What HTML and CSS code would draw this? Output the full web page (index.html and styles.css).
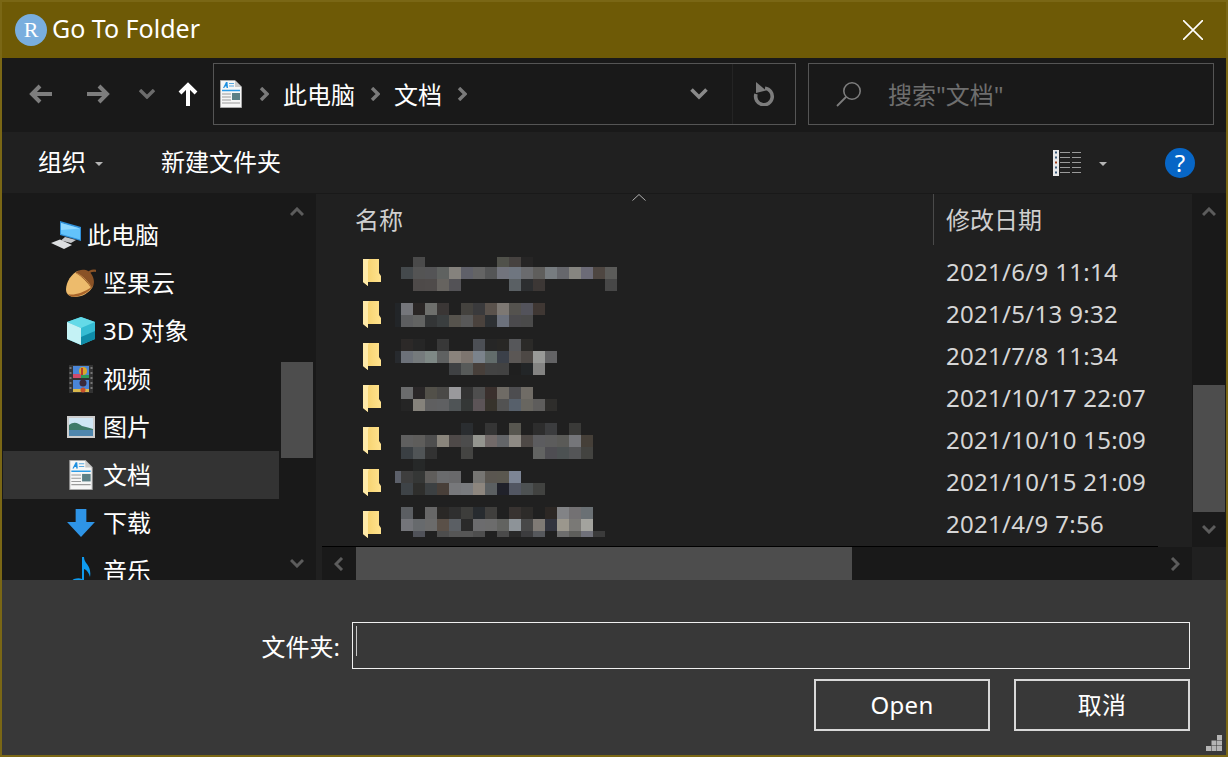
FILE: index.html
```html
<!DOCTYPE html>
<html>
	<head>
		<title>Go To Folder</title>
		<link rel="stylesheet" href="styles.css">
	</head>
	<body>
		<div class="window">
			<div class="titlebar">
				<div class="logo">R</div>
				<div class="title">Go To Folder</div>
				<svg class="close" viewBox="0 0 20 20"><path d="M0 0L20 20M20 0L0 20" stroke="#fff" stroke-width="1.6" fill="none"/></svg>
			</div>

			<div class="nav">
				<svg class="nav-back" viewBox="0 0 24 20"><path d="M23 10H4M11 2L3 10L11 18" stroke="#7d7d7d" stroke-width="4" fill="none"/></svg>
				<svg class="nav-forward" viewBox="0 0 24 20"><path d="M1 10H20M13 2L21 10L13 18" stroke="#7d7d7d" stroke-width="4" fill="none"/></svg>
				<svg class="nav-down" viewBox="0 0 16 10"><path d="M1 1L8 8L15 1" stroke="#6c6c6c" stroke-width="3.4" fill="none"/></svg>
				<svg class="nav-up" viewBox="0 0 20 24"><path d="M10 24V4M2 11L10 3L18 11" stroke="#fff" stroke-width="4" fill="none"/></svg>

				<div class="address">
					<svg class="doc" viewBox="0 0 22 28"><use href="#doc-icon"/></svg>
					<svg class="crumb" viewBox="0 0 10 14"><path d="M2 1L8 7L2 13" stroke="#7a7a7a" stroke-width="3.4" fill="none"/></svg>
					<span class="crumb-text">此电脑</span>
					<svg class="crumb" viewBox="0 0 10 14"><path d="M2 1L8 7L2 13" stroke="#7a7a7a" stroke-width="3.4" fill="none"/></svg>
					<span class="crumb-text">文档</span>
					<svg class="crumb" viewBox="0 0 10 14"><path d="M2 1L8 7L2 13" stroke="#7a7a7a" stroke-width="3.4" fill="none"/></svg>
					<svg class="address-drop" viewBox="0 0 18 12"><path d="M1.5 1.5L9 9L16.5 1.5" stroke="#8a8a8a" stroke-width="3.6" fill="none"/></svg>
					<div class="refresh">
						<svg viewBox="0 0 22 24"><path d="M12 6.200A8.300 8.300 0 1 1 3 12" stroke="#7d7d7d" stroke-width="3.6" fill="none"/><path d="M3 0L13 8.500L3 11Z" fill="#7d7d7d"/></svg>
					</div>
				</div>

				<div class="search">
					<svg viewBox="0 0 26 26"><circle cx="16" cy="10" r="8.2" stroke="#7d7d7d" stroke-width="1.6" fill="none"/><path d="M10 16L1 25" stroke="#7d7d7d" stroke-width="1.8"/></svg>
					<span>搜索"文档"</span>
				</div>
			</div>

			<div class="toolbar">
				<span class="tool">组织</span>
				<i class="caret caret-org"></i>
				<span class="tool tool-new">新建文件夹</span>
				<svg class="view-icon" viewBox="0 0 28 26">
					<rect x="0" y="0" width="6" height="26" fill="#e8e8e8"/>
					<path d="M2 2.500h2M2 7.500h2M2 17.500h2M2 22.500h2" stroke="#3a5a7a" stroke-width="2"/>
					<path d="M2 12.500h2" stroke="#a0401c" stroke-width="2"/>
					<path d="M7 2.500h10M19 2.500h9M7 7.500h10M19 7.500h9M7 12.500h10M19 12.500h9M7 17.500h10M19 17.500h9M7 22.500h10M19 22.500h9" stroke="#9a9a9a" stroke-width="1"/>
				</svg>
				<i class="caret caret-view"></i>
				<div class="help">?</div>
			</div>

			<div class="main">
				<div class="sidebar">
					<div class="tree">
						<div class="tree-row tree-root">
							<svg viewBox="0 0 30 28">
								<path d="M9 0L30 6V20L9 14Z" fill="#2f8fd8"/>
								<path d="M10 2L29 7.500V18.500L10 13Z" fill="#63c3fb"/>
								<path d="M10 2L29 7.500L10 9Z" fill="#8fd8ff"/>
								<path d="M14 16L25 19L20 22L10 19.500Z" fill="#c4c6c9"/>
								<path d="M0 22L9 18.500L21 24L13 28Z" fill="#dcdee0"/>
							</svg>
							<span>此电脑</span>
						</div>
						<div class="tree-row">
							<svg viewBox="0 0 32 30">
								<path d="M13 2C6 5 0 14 0 22C0 27 4 30 9 30C17 30 25 26 29 18Z" fill="#edbb6c"/>
								<path d="M1 26C5 29 16 27 28 19L26 22C20 28 10 31 5 29Z" fill="#a8642a"/>
								<path d="M10 4C15 -1 25 0 28 7C31 13 30 18 27 21C24 15 17 8 10 4Z" fill="#8a5226"/>
								<path d="M11 4.500C17 7 24 13 27 20" stroke="#c58a45" fill="none"/>
								<path d="M24 5C25 2.500 28 1.500 32 2" stroke="#8a5226" stroke-width="2.400" fill="none"/>
							</svg>
							<span>坚果云</span>
						</div>
						<div class="tree-row">
							<svg viewBox="0 0 30 30">
								<path d="M15 1L29 6V23L15 29L1 23V6Z" fill="#35bcd3"/>
								<path d="M15 1L29 6L15 12L1 6Z" fill="#64dae8"/>
								<path d="M1 6L15 12V29L1 23Z" fill="#c4f2f5"/>
								<path d="M15 21L29 15V23L15 29Z" fill="#0f8ca8"/>
							</svg>
							<span>3D 对象</span>
						</div>
						<div class="tree-row">
							<svg viewBox="0 0 30 30">
								<rect x="3" y="1" width="24" height="28" fill="#333"/>
								<path d="M4.500 3v2M4.500 8v2M4.500 13v2M4.500 18v2M4.500 23v2M25.500 3v2M25.500 8v2M25.500 13v2M25.500 18v2M25.500 23v2" stroke="#777" stroke-width="2"/>
								<rect x="7" y="2" width="16" height="12" fill="#4a86d8"/>
								<rect x="7" y="16" width="16" height="12" fill="#4a86d8"/>
								<rect x="7" y="10" width="8" height="4" fill="#d04a6a"/>
								<rect x="15" y="11" width="8" height="3" fill="#2f9a5a"/>
								<rect x="7" y="25" width="16" height="3" fill="#d8b84c"/>
								<circle cx="17" cy="7" r="4" fill="#d8a82c"/>
								<path d="M15 4h2v7h-2z" fill="#b83a2c"/>
								<circle cx="17" cy="19" r="3.500" fill="#3a2a3a"/>
								<circle cx="17" cy="26" r="2.500" fill="#c8502c"/>
							</svg>
							<span>视频</span>
						</div>
						<div class="tree-row">
							<svg viewBox="0 0 30 24">
								<rect x="1" y="1" width="28" height="22" fill="#cdcdcd"/>
								<rect x="3" y="3" width="24" height="18" fill="#cfe6f4"/>
								<path d="M3 10C8 6 12 8 16 11C20 12 24 13 27 14V16H3Z" fill="#3f7a68"/>
								<rect x="3" y="15" width="24" height="6" fill="#4f86ad"/>
							</svg>
							<span>图片</span>
						</div>
						<div class="tree-row tree-active">
							<svg viewBox="0 0 22 28"><use href="#doc-icon"/></svg>
							<span>文档</span>
						</div>
						<div class="tree-row">
							<svg viewBox="0 0 28 28"><path d="M9 1H19V13H27L14 27L1 13H9Z" fill="#2e94e6"/></svg>
							<span>下载</span>
						</div>
						<div class="tree-row">
							<svg viewBox="0 0 24 30"><path d="M13 1H15C15 8 23 9 21 21C20 17 18 14 15 13V24C15 28 10 30 5 30C1 30 1 25 5 23C8 22 11 22 13 23Z" fill="#0f9bef"/></svg>
							<span>音乐</span>
						</div>
					</div>
					<div class="vscroll vscroll-side">
						<svg class="arrow arrow-up" viewBox="0 0 14 10"><path d="M1 8L7 2L13 8" stroke="#5c5c5c" stroke-width="3" fill="none"/></svg>
						<div class="thumb thumb-side"></div>
						<svg class="arrow arrow-down" viewBox="0 0 14 10"><path d="M1 2L7 8L13 2" stroke="#5c5c5c" stroke-width="3" fill="none"/></svg>
					</div>
				</div>

				<div class="splitter"></div>

				<div class="content">
					<div class="content-body">
						<div class="files">
							<div class="files-head">
								<div class="head-name">名称</div>
								<div class="head-date">修改日期</div>
								<svg class="sort" viewBox="0 0 14 7"><path d="M0.500 6.500L7 0.500L13.500 6.500" stroke="#b0b0b0" fill="none"/></svg>
							</div>
							<div class="files-rows" id="rows"></div>
							<div class="files-line"></div>
						</div>
						<div class="vscroll vscroll-list">
							<svg class="arrow arrow-up" viewBox="0 0 14 10"><path d="M1 8L7 2L13 8" stroke="#5c5c5c" stroke-width="3" fill="none"/></svg>
							<div class="thumb thumb-list"></div>
							<svg class="arrow arrow-down arrow-down-list" viewBox="0 0 14 10"><path d="M1 2L7 8L13 2" stroke="#5c5c5c" stroke-width="3" fill="none"/></svg>
						</div>
					</div>
					<div class="hscroll">
						<div class="hscroll-btn"><svg viewBox="0 0 10 14"><path d="M8 1L2 7L8 13" stroke="#5c5c5c" stroke-width="3" fill="none"/></svg></div>
						<div class="hscroll-thumb"></div>
						<div class="hscroll-btn hscroll-right"><svg viewBox="0 0 10 14"><path d="M2 1L8 7L2 13" stroke="#5c5c5c" stroke-width="3" fill="none"/></svg></div>
						<div class="hscroll-corner"></div>
					</div>
				</div>
			</div>

			<div class="bottom">
				<div class="field">
					<label>文件夹:</label>
					<div class="input"><i class="text-caret"></i></div>
				</div>
				<div class="buttons">
					<div class="btn">Open</div>
					<div class="btn">取消</div>
				</div>
				<svg class="grip" viewBox="0 0 16 16">
					<path d="M11 0h5v5h-5zM5.500 5.500h5v5h-5zM11 5.500h5v5h-5zM0 11h5v5H0zM5.500 11h5v5h-5zM11 11h5v5h-5z" fill="#b4b4b4"/>
				</svg>
			</div>
		</div>

		<svg class="defs">
			<symbol id="doc-icon" viewBox="0 0 22 28">
				<path d="M0.500 0.500H15L21.500 7V27.500H0.500Z" fill="#f6f6f6" stroke="#a8a8a8"/>
				<path d="M15 0.500V7H21.500Z" fill="#c9c9c9"/>
				<path d="M3 8L6 2H7.500L8 8H6.500V6.500H5L4.300 8Z" fill="#1d8fe0"/>
				<path d="M9 3.500H14M9 6H14" stroke="#58a8e0"/>
				<path d="M2 10.500H20" stroke="#2b9be6" stroke-width="1.500"/>
				<path d="M2 14H11M2 17H11M2 20H11M2 23H20" stroke="#9a9a9a"/>
				<rect x="12" y="13" width="8" height="7" fill="#5b7f86"/>
			</symbol>
		</svg>

		<script src="script.js"></script>
	</body>
</html>
```

FILE: styles.css
```css
* {
	margin: 0; padding: 0;
	box-sizing: border-box;
}

body {
	font-family: "Noto Sans", "Noto Sans CJK SC", sans-serif;
	font-size: 24px;
	color: #fff;
	background: #383838;
	overflow: hidden;
}

.window {
	width: 1228px; height: 757px;
	display: flex;
	flex-direction: column;
	border: solid 2px #7a6715;
	position: relative;
}

.defs {
	position: absolute;
	width: 0; height: 0;
}

/* title */

.titlebar {
	height: 56px;
	flex: none;
	display: flex;
	align-items: center;
	padding-left: 13px;
	background: #6e5a06;
}

.logo {
	width: 32px; height: 32px;
	border-radius: 100%;
	background: #79aede;
	font-family: "Liberation Serif", serif;
	font-size: 22px;
	line-height: 32px;
	text-align: center;
}

.title {
	margin-left: 5px;
	margin-bottom: 4px;
	font-size: 25px;
}

.close {
	width: 20px; height: 20px;
	margin-left: auto;
	margin-right: 23px;
}

/* nav */

.nav {
	height: 74px;
	flex: none;
	display: flex;
	align-items: center;
	padding: 5px 12px 7px 0;
	background: #191919;
}

.nav-back, .nav-forward {
	width: 24px; height: 20px;
	flex: none;
}

.nav-back { margin-left: 27px; }
.nav-forward { margin-left: 33px; }

.nav-down {
	width: 16px; height: 10px;
	flex: none;
	margin-left: 29px;
}

.nav-up {
	width: 20px; height: 24px;
	flex: none;
	margin-left: 23px;
}

.address, .search {
	height: 62px;
	display: flex;
	align-items: center;
	border: solid 1px #555;
}

.address {
	width: 583px;
	flex: none;
	margin-left: 15px;
}

.doc {
	width: 22px; height: 28px;
	flex: none;
	margin-left: 6px;
	margin-right: 2px;
}

.crumb {
	width: 10px; height: 14px;
	flex: none;
	margin-left: 15px;
}

.crumb-text {
	margin-left: 14px;
	margin-bottom: 2px;
}

.address-drop {
	width: 18px; height: 12px;
	margin-left: auto;
}

.refresh {
	width: 63px; height: 100%;
	margin-left: 24px;
	display: flex;
	align-items: center;
	justify-content: center;
	border-left: solid 1px #242424;
}

.refresh svg {
	width: 22px; height: 24px;
}

.search {
	flex: 1;
	margin-left: 12px;
	color: #6e6e6e;
}

.search svg {
	width: 26px; height: 26px;
	margin-left: 27px;
}

.search span {
	margin-left: 26px;
	margin-bottom: 2px;
}

/* toolbar */

.toolbar {
	height: 62px;
	flex: none;
	display: flex;
	align-items: center;
	background: #202020;
	border-bottom: solid 1px #191919;
}

.tool {
	margin-left: 36px;
	margin-bottom: 4px;
}

.tool-new {
	margin-left: 58px;
}

.caret {
	width: 0; height: 0;
	border-left: solid 4px transparent;
	border-right: solid 4px transparent;
	border-top: solid 4px #b5b5b5;
}

.caret-org { margin-left: 9px; margin-top: 2px; }

.view-icon {
	width: 28px; height: 26px;
	margin-left: auto;
}

.caret-view { margin-left: 18px; margin-top: 2px; }

.help {
	width: 30px; height: 30px;
	margin-left: 58px;
	margin-right: 31px;
	border-radius: 100%;
	background: #0766c6;
	font-size: 24px;
	line-height: 30px;
	text-align: center;
}

/* main */

.main {
	flex: 1;
	display: flex;
	min-height: 0;
}

.sidebar {
	width: 314px;
	flex: none;
	display: flex;
	background: #191919;
}

.tree {
	width: 277px;
	padding-top: 17px;
	overflow: hidden;
}

.tree-row {
	height: 48px;
	display: flex;
	align-items: center;
	margin-left: 1px;
	padding-left: 63px;
}

.tree-row svg {
	width: 30px; height: 30px;
	flex: none;
}

.tree-row span {
	margin-left: 7px;
	margin-bottom: 4px;
}

.tree-root {
	padding-left: 48px;
}

.tree-root span {
	margin-left: 6px;
}

.tree-active {
	background: #333;
}

.vscroll {
	flex: none;
	display: flex;
	flex-direction: column;
	align-items: center;
}

.vscroll-side {
	width: 32px;
	margin-left: 2px;
	padding-right: 0;
}

.vscroll-list {
	width: 34px;
	background: #191919;
	padding-left: 1px;
	padding-right: 1px;
}

.arrow {
	width: 14px; height: 10px;
	flex: none;
}

.arrow-up { margin-top: 13px; }

.arrow-down {
	margin-top: auto;
	margin-bottom: 12px;
}

.arrow-down-list {
	margin-bottom: 13px;
}

.thumb {
	width: 100%;
	flex: none;
	background: #4d4d4d;
}

.thumb-side {
	height: 96px;
	margin-top: 145px;
}

.thumb-list {
	height: 127px;
	margin-top: 168px;
}

.splitter {
	width: 6px;
	flex: none;
	background: #202020;
}

.content {
	flex: 1;
	display: flex;
	flex-direction: column;
	min-width: 0;
}

.content-body {
	flex: 1;
	display: flex;
	min-height: 0;
}

.files {
	flex: 1;
	display: flex;
	flex-direction: column;
	background: #202020;
	min-width: 0;
}

.files-head {
	height: 51px;
	flex: none;
	display: flex;
	position: relative;
	color: #cfcfcf;
}

.head-name {
	width: 612px;
	padding-left: 33px;
	line-height: 51px;
	border-right: solid 1px #4a4a4a;
}

.head-date {
	padding-left: 12px;
	line-height: 51px;
}

.sort {
	position: absolute;
	left: 310px; top: 0;
	width: 14px; height: 7px;
}

.files-rows {
	flex: 1;
	margin-top: 6px;
	overflow: hidden;
}

.file-row {
	height: 42px;
	display: flex;
	align-items: center;
	padding-left: 41px;
}

.folder {
	width: 18px; height: 27px;
	flex: none;
}

.mosaic {
	width: 551px;
	flex: none;
	align-self: flex-start;
	margin-left: 14px;
}

.mosaic-line {
	display: flex;
}

.mosaic-line span {
	width: 12px;
	flex: none;
}

.mosaic-line span:first-child {
	width: 6px;
}

.file-date {
	color: #d6d6d6;
	letter-spacing: 0.3px;
	margin-bottom: 2px;
}

.files-line {
	width: 836px;
	height: 1px;
	flex: none;
	background: #000;
}

.hscroll {
	height: 33px;
	flex: none;
	display: flex;
	background: #191919;
}

.hscroll-btn {
	width: 34px;
	flex: none;
	display: flex;
	align-items: center;
	justify-content: center;
}

.hscroll-btn svg {
	width: 10px; height: 14px;
}

.hscroll-thumb {
	width: 496px;
	flex: none;
	background: #4d4d4d;
}

.hscroll-right {
	margin-left: auto;
}

.hscroll-corner {
	width: 34px;
	flex: none;
	background: #202020;
}

/* bottom */

.bottom {
	height: 175px;
	flex: none;
	position: relative;
	padding: 42px 36px 0 0;
	background: #383838;
}

.field {
	display: flex;
	align-items: center;
	justify-content: flex-end;
}

.field label {
	margin-right: 12px;
}

.input {
	width: 838px; height: 47px;
	border: solid 1px #f0f0f0;
	padding: 3px;
}

.text-caret {
	display: block;
	width: 1px; height: 30px;
	background: #c8c8c8;
}

.buttons {
	display: flex;
	justify-content: flex-end;
	gap: 24px;
	margin-top: 10px;
}

.btn {
	width: 176px; height: 52px;
	border: solid 2px #d8d8d8;
	line-height: 48px;
	letter-spacing: 0.3px;
	text-align: center;
}

.grip {
	position: absolute;
	right: 4px; bottom: 4px;
	width: 16px; height: 16px;
}
```

FILE: script.js
```js
// blurred file names: each row is [top, lines], each line is [height, "colours"]
// first colour of a line is the 6px sliver, "-" means no block
let names = [
	[6, [
		[10, "- - 4a4a4a - - - - - - 50514a 464240 262525"],
		[12, "- 44494c 545454 545456 5f6260 85827d 5f6069 646464 545556 72747d 6f7680 6a6b6e 5f5e5c 777c80 66676c 868580 6c6b77 4e4641 5b5b59"],
		[12, "- - 4e4a49 4f4b4a 66635f 535256 - - - - 5a6064 2c2e30 3c3735 - - - - - 474747"],
	]],
	[10, [
		[12, "222528 75767b 2a2625 6e6f6c 3a3635 - 44423e 3a3a3c 5a524c 7d7873 54524e 53535b 3f3733"],
		[12, "222528 5d5e60 626362 333536 3a3e3f 56534d 585858 4a423d 2d3033 6c717c 4b4a4d 4a4a4a"],
	]],
	[4, [
		[12, "- 2c2928 262626 - 383838 - - 4c4f55 262626 282725 56575a 2b2a28"],
		[12, "272a2e 6c7179 757a7c 7e8885 5f6161 8a837c 7d756f 7b838c 626c6b 3b4049 5b5755 4d4845 999a98 636365"],
		[12, "- - - - - 3f4143 575a59 473f3a 434343 424242 1f1f1f 222527 838382"],
	]],
	[10, [
		[12, "- 6b6c6d 2a2728 525049 4a4947 99999c 333333 4e4e4e 3a302d 6f6b65 4d4d50 706c66"],
		[12, "- 252525 85827b 5f5f60 5f6062 4f5456 343736 5c5457 37332c 525252 57606b 686660 5e5d5c 2e2d2b"],
	]],
	[4, [
		[12, "- - - - - - 2a2d30 - 353535 - 57564f - 2d2d2d 3b3c3e - 3a3a38"],
		[12, "- 5f5f5f 5e5d5b 4e4e4e 8a857c 4e4948 4c4c4c 94958f 726a69 636568 8e8a84 4e4946 5c5c5f 5c5c5c 5a5a57 75767a 453f38"],
		[12, "- 3a3f43 505456 323232 - - 444442 - - - - - 626362 4e4d52 4c5152 545557 434340"],
	]],
	[-2, [
		[12, "- - 262828 - - - - - - - - - - - -"],
		[12, "5c606a 3e3e3e 353736 5f5d5b 6a6b6d 69696b - 767572 5a5650 5a574f 7d8595"],
		[12, "- 3e4347 2e2e2c 3c4042 483f39 77787b 797b7e 8d867e 5b5f61 20212a 525662 4d5152 414240"],
	]],
	[4, [
		[12, "- 5b5e62 - 676767 2a2826 2f2f2f 3d3d3b 272b2f 403f3d - 383331 2d2b29 - 2c2724 828386 737173 6a7074"],
		[12, "- 74757a 676a6d 6b6b6b 5a5048 5b5f64 2a2a2a 6c6c6e 6c6c6c 626360 8d9398 484848 7f7a75 32343e 9b978d 7a7976 a3a39e"],
		[6, "- - 505259 - 4d4d4d 565656 565656 4e4e4e - 4a4a4a 292929 3c3c3e 56585c - 6d6d6d 5e5e5b 70717a 3b3b3b"],
	]],
];

let dates = [
	"2021/6/9 11:14",
	"2021/5/13 9:32",
	"2021/7/8 11:34",
	"2021/10/17 22:07",
	"2021/10/10 15:09",
	"2021/10/15 21:09",
	"2021/4/9 7:56",
];

let folderSvg = '<svg class="folder" viewBox="0 0 18 27">' +
	'<defs><linearGradient id="fg" x1="0" x2="1" y1="0" y2="0"><stop offset="0" stop-color="#f4cf68"/><stop offset="1" stop-color="#ffe28e"/></linearGradient></defs>' +
	'<path d="M0 0H16V14L18 17V23H5V27L0 23Z" fill="url(#fg)"/>' +
	'<path d="M0 0H6C5 1 5 3 5 5V23V27L0 23Z" fill="#ffeaa8"/>' +
	'</svg>';

let elRows = document.getElementById("rows");

names.forEach((name, i)=>{
	let elRow = document.createElement("div");
	elRow.className = "file-row";
	elRow.innerHTML = folderSvg;

	let elMosaic = document.createElement("div");
	elMosaic.className = "mosaic";
	elMosaic.style.marginTop = name[0]+"px";

	name[1].forEach(line=>{
		let elLine = document.createElement("div");
		elLine.className = "mosaic-line";
		elLine.style.height = line[0]+"px";
		line[1].split(" ").forEach(colour=>{
			let elBlock = document.createElement("span");
			if (colour!="-") elBlock.style.background = "#"+colour;
			elLine.appendChild(elBlock);
		});
		elMosaic.appendChild(elLine);
	});
	elRow.appendChild(elMosaic);

	let elDate = document.createElement("div");
	elDate.className = "file-date";
	elDate.textContent = dates[i];
	elRow.appendChild(elDate);

	elRows.appendChild(elRow);
});
```
